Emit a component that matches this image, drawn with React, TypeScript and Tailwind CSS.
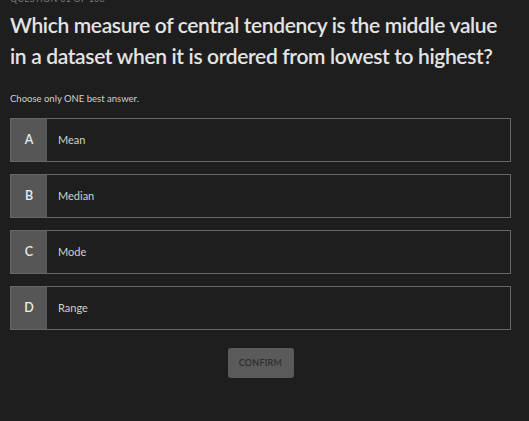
import React from 'react';

const options = [
  { key: 'A', label: 'Mean' },
  { key: 'B', label: 'Median' },
  { key: 'C', label: 'Mode' },
  { key: 'D', label: 'Range' }
];

export default function App() {
  return <div className="min-h-[421px] w-full bg-[#1e1e1e] text-[#e2e2e2] px-[10px] overflow-hidden" style={{
    fontFamily: 'Lato, "Noto Sans", sans-serif'
  }}>
      <div className="-mt-[7px] text-[9px] leading-[12px] text-[#7a7a7a] tracking-wide">QUESTION 01 OF 100</div>
      <h1 className="mt-[4px] max-w-[492px] text-[21px] leading-[31px] font-semibold text-[#e4e4e4] tracking-[-0.35px]">
        Which measure of central tendency is the middle value in a dataset when it is ordered from lowest to highest?
      </h1>
      <p className="mt-[21px] text-[9.5px] leading-[14px] text-[#cfcfcf]">Choose only ONE best answer.</p>
      <div className="mt-[12px] flex flex-col gap-[12px] w-[501px]">
        {options.map(o => <button key={o.key} className="flex h-[44px] border border-[#666] bg-[#1e1e1e] text-left">
            <span className="w-[36px] h-full bg-[#565656] flex items-center justify-center text-[12.5px] font-semibold text-[#ececec]">
              {o.key}
            </span>
            <span className="flex items-center pl-[11px] text-[11px] text-[#d0d0d0]">{o.label}</span>
          </button>)}
      </div>
      <div className="flex justify-center w-[501px] mt-[18px]">
        <button className="w-[66px] h-[30px] rounded-[3px] bg-[#5a5a5a] text-[9px] font-semibold text-[#2e2e2e] tracking-wide">
          CONFIRM
        </button>
      </div>
    </div>;
}
